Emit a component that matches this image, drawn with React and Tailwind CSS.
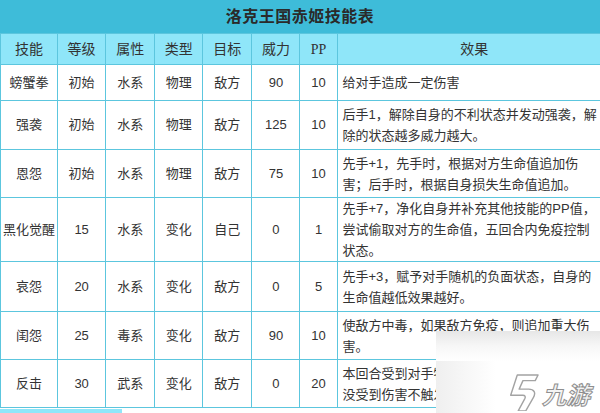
const rows = [
  { name: '螃蟹拳', lv: '初始', attr: '水系', type: '物理', target: '敌方', power: '90', pp: '10', h: 'h-[36px]', effect: ['给对手造成一定伤害'] },
  { name: '强袭', lv: '初始', attr: '水系', type: '物理', target: '敌方', power: '125', pp: '10', h: 'h-[49px]', effect: ['后手1，解除自身的不利状态并发动强袭，解', '除的状态越多威力越大。'] },
  { name: '恩怨', lv: '初始', attr: '水系', type: '物理', target: '敌方', power: '75', pp: '10', h: 'h-[48px]', effect: ['先手+1，先手时，根据对方生命值追加伤', '害；后手时，根据自身损失生命值追加。'] },
  { name: '黑化觉醒', lv: '15', attr: '水系', type: '变化', target: '自己', power: '0', pp: '1', h: 'h-[64px]', effect: ['先手+7，净化自身并补充其他技能的PP值，', '尝试偷取对方的生命值，五回合内免疫控制', '状态。'] },
  { name: '哀怨', lv: '20', attr: '水系', type: '变化', target: '敌方', power: '0', pp: '5', h: 'h-[50px]', effect: ['先手+3，赋予对手随机的负面状态，自身的', '生命值越低效果越好。'] },
  { name: '闺怨', lv: '25', attr: '毒系', type: '变化', target: '敌方', power: '90', pp: '10', h: 'h-[48px]', effect: ['使敌方中毒，如果敌方免疫，则追加重大伤', '害。'] },
  { name: '反击', lv: '30', attr: '武系', type: '变化', target: '敌方', power: '0', pp: '20', h: 'h-[48px]', effect: ['本回合受到对手物理攻击时进行反击，', '没受到伤害不触发。'] },
];

const headers = ['技能', '等级', '属性', '类型', '目标', '威力', 'PP', '效果'];
const widths = ['w-[57px]', 'w-[48px]', 'w-[49px]', 'w-[48px]', 'w-[49px]', 'w-[48px]', 'w-[37px]', 'w-[274px]'];

const cell = 'border border-[#5cc6de] text-center align-middle p-0';

// 九游 watermark: blurred white panel in the bottom-right corner
function Watermark() {
  return (
    <div className="absolute right-0 bottom-0 w-[164px] h-[82px] pointer-events-none">
      <div className="absolute inset-0 bg-white" />
      <div className="absolute inset-y-0 left-0 w-[8px] bg-gradient-to-r from-white/60 to-white" />
      <div className="absolute inset-x-0 top-0 h-[30px] bg-gradient-to-b from-[#dcdcdc]/70 via-[#eeeeee]/50 to-transparent" />
      <div className="absolute top-[30px] left-0 w-[60px] h-[52px] bg-gradient-to-r from-[#e4e4e4]/60 to-transparent" />
      <div className="relative flex items-end h-full pl-[69px] pb-[2px] gap-[3px]">
        <svg viewBox="0 0 36 42" className="w-[34px] h-[40px]" fill="none" stroke="#a3a3a3" strokeWidth="1.5" strokeLinejoin="round">
          <path d="M13 4 L35 4 L32 10 L19 10 L15 19 L25 19 C31 19 33 23 30 28 L22 42 L14 42 L21 29 C22 27 21 25.5 19 25.5 L6 25.5 Z" />
        </svg>
        <span className="text-[24px] leading-[28px] italic font-bold text-[#f4f4f4] [-webkit-text-stroke:1px_#8f8f8f] mb-[3px] [font-family:'Noto_Sans_CJK_SC',sans-serif]">
          九游
        </span>
      </div>
    </div>
  );
}

export default function App() {
  return (
    <div className="relative w-[600px] h-[413px] overflow-hidden bg-white text-[#333] [font-family:'Liberation_Sans','Noto_Sans_CJK_SC',sans-serif]">
      <div className="w-[612px]">
        <div className="h-[34px] bg-[#3ebcd9] flex items-center justify-center pr-[12px] border-b border-[#55bdd6]">
          <span className="text-[16px] font-bold text-[#2a2a2a] tracking-[0.5px]">洛克王国赤姬技能表</span>
        </div>
        <table className="table-fixed border-collapse w-[612px] -mt-px">
          <colgroup>
            {widths.map((w, i) => (
              <col key={i} className={w} />
            ))}
          </colgroup>
          <thead>
            <tr className="h-[31px] bg-[#8fe6f9]">
              {headers.map((h) => (
                <th key={h} className={`${cell} font-normal text-[14px] ${h === 'PP' ? "text-[12px] [font-family:'Liberation_Serif',serif]" : ''}`}>
                  {h}
                </th>
              ))}
            </tr>
          </thead>
          <tbody className="text-[13px]">
            {rows.map((r) => (
              <tr key={r.name} className={r.h}>
                <td className={`${cell} whitespace-nowrap`}>{r.name}</td>
                <td className={cell}>{r.lv}</td>
                <td className={cell}>{r.attr}</td>
                <td className={cell}>{r.type}</td>
                <td className={cell}>{r.target}</td>
                <td className={cell}>{r.power}</td>
                <td className={cell}>{r.pp}</td>
                <td className={`${cell} text-left pl-[5px] leading-[21px]`}>
                  {r.effect.map((line) => (
                    <div key={line} className="whitespace-nowrap">{line}</div>
                  ))}
                </td>
              </tr>
            ))}
          </tbody>
        </table>
        <div className="h-[5px] w-[122px] bg-[#8fe6f9] mt-px" />
      </div>
      <Watermark />
    </div>
  );
}
